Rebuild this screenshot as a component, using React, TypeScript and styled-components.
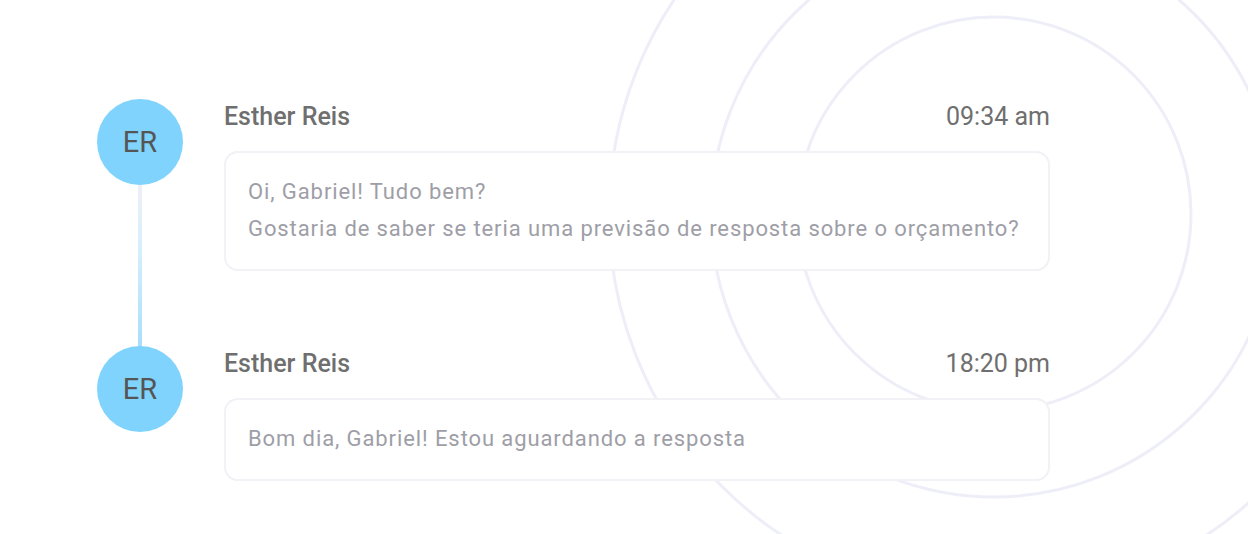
import React from "react";
import styled, { createGlobalStyle } from "styled-components";

type Message = {
  initials: string;
  name: string;
  time: string;
  lines: string[];
};

const messages: Message[] = [
  {
    initials: "ER",
    name: "Esther Reis",
    time: "09:34 am",
    lines: [
      "Oi, Gabriel! Tudo bem?",
      "Gostaria de saber se teria uma previsão de resposta sobre o orçamento?",
    ],
  },
  {
    initials: "ER",
    name: "Esther Reis",
    time: "18:20 pm",
    lines: ["Bom dia, Gabriel! Estou aguardando a resposta"],
  },
];

const App = () => {
  return (
    <>
      <GlobalStyle />
      <Page>
        <Rings width="1248" height="534" viewBox="0 0 1248 534">
          <circle cx="994" cy="214" r="197" />
          <circle cx="994" cy="214" r="283" />
          <circle cx="994" cy="214" r="385" />
        </Rings>
        <Timeline>
          {messages.map((m, i) => {
            const last = i === messages.length - 1;
            return (
              <Row key={i}>
                <Rail>
                  <Avatar>{m.initials}</Avatar>
                  {!last && <Connector />}
                </Rail>
                <Content $last={last}>
                  <Header>
                    <Name>{m.name}</Name>
                    <Time>{m.time}</Time>
                  </Header>
                  <Bubble>
                    {m.lines.map((l, j) => (
                      <Line key={j}>{l}</Line>
                    ))}
                  </Bubble>
                </Content>
              </Row>
            );
          })}
        </Timeline>
      </Page>
    </>
  );
};

const GlobalStyle = createGlobalStyle`
  html, body {
    margin: 0;
    padding: 0;
    background: #ffffff;
  }
  body {
    font-family: Roboto, "Liberation Sans", sans-serif;
  }
`;

const Page = styled.div`
  position: relative;
  width: 1248px;
  height: 534px;
  overflow: hidden;
  background: #ffffff;
`;

const Rings = styled.svg`
  position: absolute;
  top: 0;
  left: 0;
  z-index: 0;

  circle {
    fill: none;
    stroke: #eeeef8;
    stroke-width: 3;
  }
`;

const Timeline = styled.div`
  position: relative;
  z-index: 1;
  display: flex;
  flex-direction: column;
  width: 953px;
  padding: 99px 0 0 97px;
`;

const Row = styled.div`
  display: flex;
  align-items: stretch;
  gap: 41px;
`;

const Rail = styled.div`
  display: flex;
  flex-direction: column;
  align-items: center;
  width: 86px;
  flex-shrink: 0;
`;

const Avatar = styled.div`
  width: 86px;
  height: 86px;
  border-radius: 50%;
  background: #80d3fc;
  color: #555555;
  font-size: 29px;
  display: flex;
  align-items: center;
  justify-content: center;
  flex-shrink: 0;
`;

const Connector = styled.div`
  flex: 1;
  width: 4px;
  background: linear-gradient(180deg, #eef0f5 0%, #d6effc 40%, #a8defc 100%);
`;

const Content = styled.div<{ $last: boolean }>`
  flex: 1;
  display: flex;
  flex-direction: column;
  gap: 21px;
  padding-top: 3px;
  padding-bottom: ${(p) => (p.$last ? "0" : "75px")};
`;

const Header = styled.div`
  display: flex;
  justify-content: space-between;
  align-items: center;
  height: 28px;
  color: #6f6f6f;
  font-size: 25px;
`;

const Name = styled.span`
  font-weight: 500;
`;

const Time = styled.span`
  font-weight: 400;
`;

const Bubble = styled.div`
  background: #ffffff;
  border: 2px solid #f1f1f6;
  border-radius: 14px;
  padding: 20px 22px 22px;
  display: flex;
  flex-direction: column;
`;

const Line = styled.p`
  margin: 0;
  font-size: 22px;
  line-height: 37px;
  letter-spacing: 0.9px;
  color: #9e9ea7;
`;

export default App;
